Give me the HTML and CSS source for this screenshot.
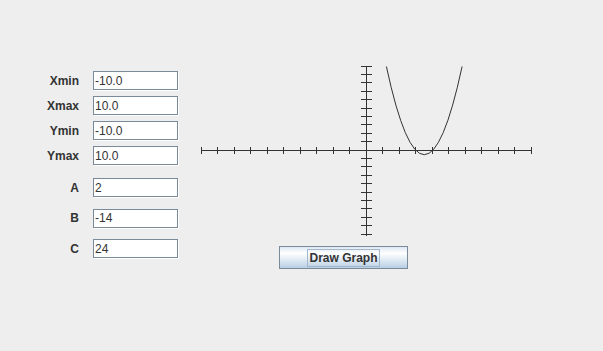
FILE: index.html
```html
<!DOCTYPE html>
<html>

<head>
  <title>Quadratic Grapher</title>
  <meta charset="utf-8" />
  <link rel="stylesheet" href="styles.css">
</head>

<body>
  <div id="main">
    <div id="form">
      <div class="bounds">
        <div class="row"><label class="label">Xmin</label><input class="field" type="text" value="-10.0"></div>
        <div class="row"><label class="label">Xmax</label><input class="field" type="text" value="10.0"></div>
        <div class="row"><label class="label">Ymin</label><input class="field" type="text" value="-10.0"></div>
        <div class="row"><label class="label">Ymax</label><input class="field" type="text" value="10.0"></div>
      </div>
      <div class="coefs">
        <div class="row"><label class="label">A</label><input class="field" type="text" value="2"></div>
        <div class="row"><label class="label">B</label><input class="field" type="text" value="-14"></div>
        <div class="row"><label class="label">C</label><input class="field" type="text" value="24"></div>
      </div>
    </div>

    <div id="graph">
      <svg class="plot" width="334" height="172" viewBox="0 0 334 172">
        <!-- axes -->
        <g class="axes">
          <path d="M1 85.5H332 M166.5 1V171" />
          <path d="M1.5 82V89 M17.5 82V89 M34.5 82V89 M50.5 82V89 M67.5 82V89 M83.5 82V89 M100.5 82V89 M116.5 82V89 M133.5 82V89 M149.5 82V89 M166.5 82V89 M182.5 82V89 M199.5 82V89 M215.5 82V89 M232.5 82V89 M248.5 82V89 M265.5 82V89 M281.5 82V89 M298.5 82V89 M314.5 82V89 M331.5 82V89" />
          <path d="M161 1.5H172 M161 9.5H172 M161 17.5H172 M161 26.5H172 M161 34.5H172 M161 43.5H172 M161 51.5H172 M161 59.5H172 M161 68.5H172 M161 76.5H172 M161 93.5H172 M161 101.5H172 M161 110.5H172 M161 118.5H172 M161 127.5H172 M161 135.5H172 M161 143.5H172 M161 152.5H172 M161 160.5H172 M161 169.5H172" />
        </g>
        <!-- y = 2x^2 - 14x + 24, clipped at ymax -->
        <path class="curve" d="M186.4 1.5 Q224.25 177.9 262.1 1.5" />
      </svg>
      <button class="draw-button"><span class="focus">Draw Graph</span></button>
    </div>
  </div>
</body>

</html>
```

FILE: styles.css
```css
html,
body {
  background-color: #eeeeee;
  margin: 0;
  padding: 0;
}

body {
  font-family: "Liberation Sans", Arial, sans-serif;
  font-size: 12px;
  color: #333333;
}

#main {
  display: flex;
  align-items: flex-start;
  padding: 65px 0 0 40px;
}

#form {
  display: flex;
  flex-direction: column;
  margin-top: 6px;
}

.bounds {
  display: flex;
  flex-direction: column;
  gap: 5px;
}

.coefs {
  display: flex;
  flex-direction: column;
  gap: 10.5px;
  margin-top: 12px;
}

.row {
  display: flex;
  align-items: center;
  height: 20px;
}

.label {
  width: 39px;
  margin-right: 14px;
  text-align: right;
  font-weight: bold;
  line-height: 19px;
}

.field {
  box-sizing: border-box;
  width: 85px;
  height: 19px;
  margin: 0 1px 1px 0;
  padding: 0 2px 0 1px;
  border: 1px solid #7a8a99;
  box-shadow: 1px 1px 0 #ffffff;
  background: #ffffff;
  font-family: "Liberation Sans", Arial, sans-serif;
  font-size: 12px;
  color: #333333;
  outline: none;
}

#graph {
  display: flex;
  flex-direction: column;
  margin-left: 21px;
}

.plot {
  display: block;
}

.axes path {
  stroke: #333333;
  stroke-width: 1;
  fill: none;
  shape-rendering: crispEdges;
}

.curve {
  stroke: #333333;
  stroke-width: 1;
  fill: none;
}

.draw-button {
  box-sizing: border-box;
  display: flex;
  align-items: center;
  justify-content: center;
  width: 129px;
  height: 23px;
  margin: 9px 0 0 79px;
  padding: 0;
  border: 1px solid #7a8a99;
  background: linear-gradient(#dde8f3 0%, #ffffff 30%, #b8cfe5 100%);
  font-family: "Liberation Sans", Arial, sans-serif;
  font-size: 12px;
  font-weight: bold;
  color: #333333;
}

.focus {
  border: 1px solid #a3b8cc;
  padding: 1px 1px 1px 1px;
  line-height: 14px;
}
```
